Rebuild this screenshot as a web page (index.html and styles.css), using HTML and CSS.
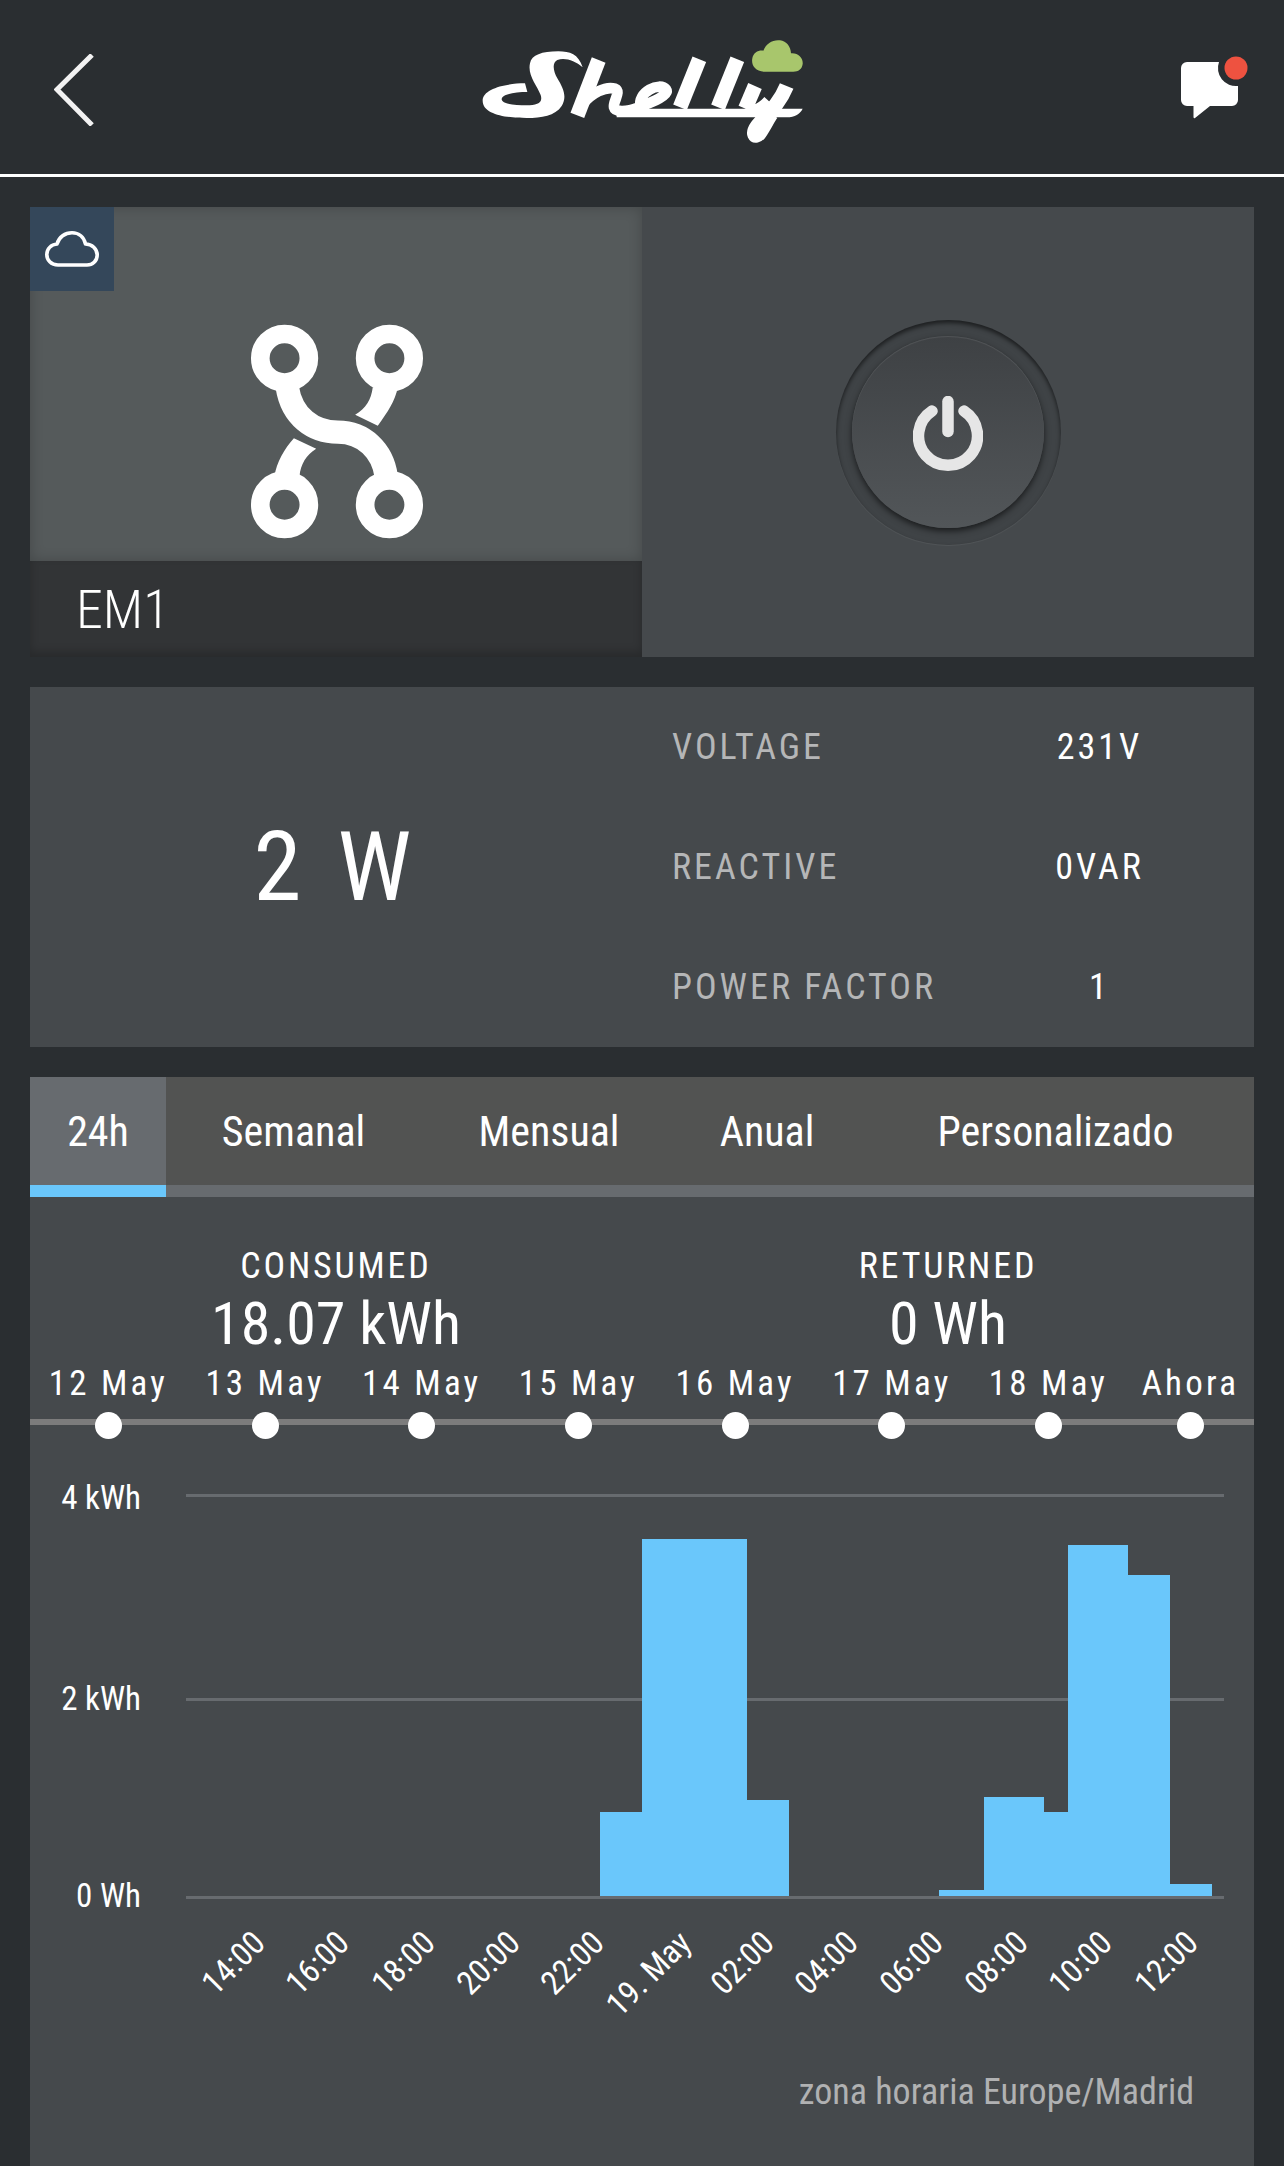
FILE: index.html
```html
<!DOCTYPE html>
<html lang="es">
<head>
<meta charset="utf-8">
<title>Shelly EM1</title>
<link rel="stylesheet" href="styles.css">
</head>
<body>
<div class="page">
  <header class="topbar">
    <svg class="back" viewBox="0 0 40 72" aria-label="Volver"><path d="M38 1 L3 35.500 L38 71"/></svg>
    <svg class="logo" viewBox="0 0 1050 360" role="img" aria-label="Shelly">
      <path class="logo-cloud" d="M885 125 C855 125 843 105 847 85 C850 68 865 60 880 62 C888 40 910 28 930 31 C950 34 962 50 963 70 C985 68 1000 85 998 102 C996 118 985 125 970 125 Z"/>
      <path class="logo-fill" d="M180 100 C185 75 215 64 265 64 C300 64 325 72 338 112 C315 92 285 82 262 90 C245 98 250 125 262 145 C280 175 292 200 275 228 C255 258 215 264 170 264 C115 264 38 255 38 212 C38 175 110 160 165 160 L172 186 C135 186 95 192 95 208 C95 222 135 226 170 226 C200 226 220 220 212 195 C200 165 172 135 180 100 Z"/>
      <path class="logo-stroke" d="M386 90 L322 256"/>
      <path class="logo-stroke thin" d="M338 222 C365 190 405 168 435 176 C455 184 428 215 432 232 C436 248 470 246 505 232 C550 215 600 195 588 178 C570 155 500 185 512 232"/>
      <path class="logo-stroke" d="M688 88 L630 232"/>
      <path class="logo-stroke" d="M802 88 L744 232"/>
      <path class="logo-stroke" d="M855 168 L826 236"/>
      <path class="logo-stroke thin" d="M826 236 C835 250 870 240 895 212"/>
      <path class="logo-stroke" d="M950 168 C925 228 888 255 862 288 C845 312 855 325 868 310 C885 285 895 262 905 250"/>
      <path class="logo-fill" d="M440 236 L998 236 C990 252 975 262 950 262 L440 262 Z"/>
    </svg>
    <svg class="msg" viewBox="0 0 74 68" aria-label="Mensajes">
      <path class="msg-bubble" d="M6 6 H38 A18 18 0 0 0 57 30 V44 A6 6 0 0 1 51 50 H29 L14 62 C13 62.500 12.500 62 12.500 61 V50 H6 A6 6 0 0 1 0 44 V12 A6 6 0 0 1 6 6 Z"/>
      <circle class="msg-dot" cx="55" cy="12" r="11.500"/>
    </svg>
  </header>
  <div class="rule"></div>
  <main class="content">
    <section class="hero">
      <div class="device">
        <div class="device-art">
          <svg class="device-icon" viewBox="57 75 518 640" aria-hidden="true">
            <circle cx="160" cy="175" r="73"/>
            <circle cx="475" cy="175" r="73"/>
            <circle cx="160" cy="615" r="73"/>
            <circle cx="475" cy="615" r="73"/>
            <path d="M168 262 C182 350 245 397 320 397 C400 397 455 455 465 528"/>
            <path class="arm" d="M425 262 C420 300 405 325 372 345 L440 378 C470 335 492 305 500 262 Z"/>
            <path class="arm" d="M130 528 C135 490 160 445 188 415 L255 447 C225 465 208 495 205 528 Z"/>
          </svg>
        </div>
        <div class="device-name">EM1</div>
        <div class="cloud-badge">
          <svg viewBox="0 0 54 36" aria-hidden="true"><path d="M13 34 C6 34 1.800 29 1.800 23.500 C1.800 18 6 13.500 12 13 C14 6 20 1.800 27 1.800 C34 1.800 39 6.500 40.500 13 C47 13 52.200 18 52.200 24 C52.200 30 47.500 34 42 34 Z"/></svg>
        </div>
      </div>
      <div class="switch">
        <div class="well">
          <button class="power" type="button" aria-label="Encender">
            <svg viewBox="0 0 70 76" aria-hidden="true"><path class="power-arc" d="M19 15 A29.500 29.500 0 1 0 51 15"/><path class="power-arc" d="M35 5.500 V35.500"/></svg>
          </button>
        </div>
      </div>
    </section>

    <section class="meter">
      <div class="meter-main">2 W</div>
      <dl class="meter-list">
        <dt>VOLTAGE</dt><dd>231V</dd>
        <dt>REACTIVE</dt><dd>0VAR</dd>
        <dt>POWER FACTOR</dt><dd>1</dd>
      </dl>
    </section>

    <section class="history">
      <nav class="tabs">
        <a class="tab tab-active">24h</a>
        <a class="tab">Semanal</a>
        <a class="tab">Mensual</a>
        <a class="tab">Anual</a>
        <a class="tab">Personalizado</a>
      </nav>
      <div class="totals">
        <div class="total">
          <div class="total-label">CONSUMED</div>
          <div class="total-value">18.07 kWh</div>
        </div>
        <div class="total">
          <div class="total-label">RETURNED</div>
          <div class="total-value">0 Wh</div>
        </div>
      </div>
      <div class="timeline">
        <div class="stop"><span>12 May</span><i></i></div>
        <div class="stop"><span>13 May</span><i></i></div>
        <div class="stop"><span>14 May</span><i></i></div>
        <div class="stop"><span>15 May</span><i></i></div>
        <div class="stop"><span>16 May</span><i></i></div>
        <div class="stop"><span>17 May</span><i></i></div>
        <div class="stop"><span>18 May</span><i></i></div>
        <div class="stop stop-last"><span>Ahora</span><i></i></div>
      </div>
      <svg class="chart" viewBox="30 1439 1224 620" role="img" aria-label="Consumo 24h">
        <rect class="grid" x="186" y="1494" width="1038" height="3"/>
        <rect class="grid" x="186" y="1698" width="1038" height="3"/>
        <rect class="grid" x="186" y="1896" width="1038" height="3"/>
        <g class="bars">
          <rect x="600" y="1812" width="42" height="84"/>
          <rect x="642" y="1539" width="105" height="357"/>
          <rect x="747" y="1800" width="42" height="96"/>
          <rect x="939" y="1890" width="45" height="6"/>
          <rect x="984" y="1797" width="60" height="99"/>
          <rect x="1044" y="1812" width="24" height="84"/>
          <rect x="1068" y="1545" width="60" height="351"/>
          <rect x="1128" y="1575" width="42" height="321"/>
          <rect x="1170" y="1884" width="42" height="12"/>
        </g>
        <g class="y-axis">
          <text x="141" y="1509">4 kWh</text>
          <text x="141" y="1710">2 kWh</text>
          <text x="141" y="1907">0 Wh</text>
        </g>
        <g class="x-axis">
          <text transform="translate(267 1945) rotate(-45)">14:00</text>
          <text transform="translate(351 1945) rotate(-45)">16:00</text>
          <text transform="translate(437 1945) rotate(-45)">18:00</text>
          <text transform="translate(522 1945) rotate(-45)">20:00</text>
          <text transform="translate(606 1945) rotate(-45)">22:00</text>
          <text transform="translate(693 1945) rotate(-45)">19. May</text>
          <text transform="translate(776 1945) rotate(-45)">02:00</text>
          <text transform="translate(860 1945) rotate(-45)">04:00</text>
          <text transform="translate(945 1945) rotate(-45)">06:00</text>
          <text transform="translate(1030 1945) rotate(-45)">08:00</text>
          <text transform="translate(1114 1945) rotate(-45)">10:00</text>
          <text transform="translate(1200 1945) rotate(-45)">12:00</text>
        </g>
      </svg>
      <p class="tz">zona horaria Europe/Madrid</p>
    </section>
  </main>
</div>
</body>
</html>
```
FILE: styles.css
```css
* { box-sizing: border-box; }
html, body { margin: 0; height: 100%; }
body {
  background: #2a2e31;
  color: #fff;
  font-family: "Roboto Condensed", Roboto, sans-serif;
  font-stretch: 75%;
  overflow: hidden;
}
.page { display: flex; flex-direction: column; height: 2166px; }
.topbar { height: 174px; position: relative; flex: none; }
.back { position: absolute; left: 54px; top: 54px; width: 40px; height: 72px; }
.back path { fill: none; stroke: #f2f2f2; stroke-width: 5; }
.logo { width: 350px; height: 120px; position: absolute; left: 470px; top: 30px; }
.logo-cloud { fill: #a8c66c; }
.logo-fill { fill: #fff; }
.logo-stroke { fill: none; stroke: #fff; stroke-width: 44; stroke-linejoin: round; }
.logo-stroke.thin { stroke-width: 32; }
.msg { position: absolute; left: 1181px; top: 56px; width: 74px; height: 68px; }
.msg-bubble { fill: #fff; }
.msg-dot { fill: #ee5240; }
.rule { height: 3px; background: #fff; flex: none; }
.content {
  flex: 1;
  display: flex;
  flex-direction: column;
  gap: 30px;
  padding: 30px 30px 0;
  min-height: 0;
}
.hero { display: grid; grid-template-columns: 612px 612px; height: 450px; flex: none; background: #45494c; }
.device { position: relative; display: flex; flex-direction: column; }
.device-art {
  flex: 1;
  background: #555a5b;
  display: flex;
  align-items: center;
  justify-content: center;
  padding-top: 95px;
  box-shadow: inset 0 0 14px rgba(0,0,0,.2);
}
.device-icon { width: 173px; height: 213px; overflow: visible; }
.device-icon circle, .device-icon path { fill: none; stroke: #fff; }
.device-icon circle { stroke-width: 56; }
.device-icon path { stroke-width: 70; }
.device-icon path.arm { fill: #fff; stroke: none; }
.device-name {
  height: 96px;
  background: #323436;
  box-shadow: inset 0 -5px 10px rgba(0,0,0,.2);
  display: flex;
  align-items: center;
  padding-left: 46px;
  font-size: 54px;
  font-weight: 300;
}
.cloud-badge {
  position: absolute;
  left: 0;
  top: 0;
  width: 84px;
  height: 84px;
  background: #34475a;
  display: flex;
  align-items: center;
  justify-content: center;
}
.cloud-badge svg { width: 54px; height: 36px; }
.cloud-badge path { fill: none; stroke: #fff; stroke-width: 3.600; stroke-linejoin: round; }
.switch { display: flex; align-items: center; justify-content: center; }
.well {
  width: 225px;
  height: 225px;
  border-radius: 50%;
  display: flex;
  align-items: center;
  justify-content: center;
  background: #3f4346;
  box-shadow: inset 0 3px 4px rgba(0,0,0,.55), 0 1px 1px rgba(255,255,255,.07);
}
.power {
  width: 192px;
  height: 192px;
  border: 0;
  padding: 0;
  border-radius: 50%;
  display: flex;
  align-items: center;
  justify-content: center;
  background: linear-gradient(#3e4144, #525659);
  box-shadow: 0 3px 6px rgba(0,0,0,.6), inset 0 1px 1px rgba(255,255,255,.1);
}
.power svg { width: 70px; height: 76px; margin-top: 3px; }
.power-arc { fill: none; stroke: #e6e6e6; stroke-width: 11.500; stroke-linecap: round; }
.meter {
  flex: none;
  height: 360px;
  background: #45494c;
  display: grid;
  grid-template-columns: 612px 1fr;
  align-items: center;
}
.meter-main { text-align: center; font-size: 97px; letter-spacing: 7px; }
.meter-list {
  margin: 0;
  padding-left: 30px;
  height: 100%;
  display: grid;
  grid-template-columns: 273px 1fr;
  grid-template-rows: repeat(3, 1fr);
  align-items: center;
}
.meter-list dt { color: #b5b6b7; font-size: 36px; letter-spacing: 3px; white-space: nowrap; }
.meter-list dd { margin: 0; text-align: center; font-size: 36px; letter-spacing: 3px; }
.history { flex: 1; min-height: 0; background: #45494c; display: flex; flex-direction: column; }
.tabs {
  flex: none;
  display: grid;
  grid-template-columns: 136px 255px 256px 180px 1fr;
  background: #525352;
}
.tab {
  height: 120px;
  border-bottom: 12px solid #676b6f;
  display: flex;
  align-items: center;
  justify-content: center;
  font-size: 42px;
}
.tab-active { background: #676b6f; border-bottom-color: #6ac7fb; }
.totals { flex: none; display: grid; grid-template-columns: 1fr 1fr; padding-top: 49px; text-align: center; }
.total-label { font-size: 36px; line-height: 40px; letter-spacing: 2.800px; }
.total-value { font-size: 60px; line-height: 70px; margin-top: 3px; }
.timeline { flex: none; position: relative; display: flex; margin-top: 5px; }
.timeline::before { content: ""; position: absolute; left: 0; right: 0; top: 55px; height: 6px; background: #7c7c7c; }
.stop { position: relative; width: 156.700px; display: flex; flex-direction: column; align-items: center; }
.stop-last { width: auto; flex: 1; }
.stop span { font-size: 35px; line-height: 40px; letter-spacing: 3.200px; white-space: nowrap; }
.stop i { width: 27px; height: 27px; margin-top: 8px; border-radius: 50%; background: #fff; }
.chart { flex: none; width: 1224px; height: 620px; display: block; }
.bars rect { fill: #6ac7fb; }
.grid { fill: #676b6f; }
.y-axis text { fill: #fff; font-size: 33px; text-anchor: end; }
.x-axis text { fill: #fff; font-size: 33px; text-anchor: end; }
.tz { margin: 8px 60px 0 0; text-align: right; font-size: 36px; line-height: 50px; color: #b0b1b2; }
```
